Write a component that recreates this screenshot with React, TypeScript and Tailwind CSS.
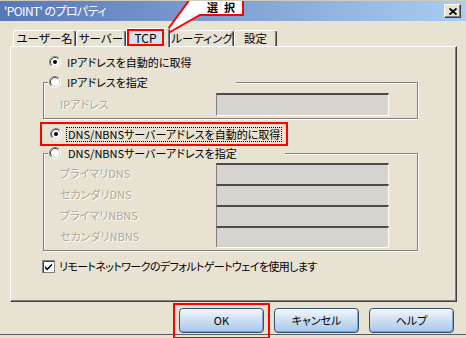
import React from "react";

function Radio({ checked }: { checked?: boolean }) {
  return (
    <svg width="12" height="12" viewBox="0 0 12 12" className="shrink-0">
      <circle cx="6" cy="6" r="5.5" fill="#fff" />
      <path d="M2.1 9.9 A5.5 5.5 0 0 1 9.9 2.1" stroke="#808080" strokeWidth="1" fill="none" />
      <path d="M9.9 2.1 A5.5 5.5 0 0 1 2.1 9.9" stroke="#ffffff" strokeWidth="1" fill="none" />
      <path d="M2.8 9.2 A4.5 4.5 0 0 1 9.2 2.8" stroke="#404040" strokeWidth="1" fill="none" />
      <path d="M9.2 2.8 A4.5 4.5 0 0 1 2.8 9.2" stroke="#d4d0c8" strokeWidth="1" fill="none" />
      {checked && <circle cx="6" cy="6" r="2" fill="#000" />}
    </svg>
  );
}

function Check() {
  return (
    <svg width="13" height="13" viewBox="0 0 13 13" className="shrink-0">
      <rect x="0.5" y="0.5" width="12" height="12" fill="#fff" stroke="#808080" />
      <path d="M1.5 12.5 V1.5 H12" stroke="#404040" fill="none" />
      <path d="M3 6 L5.2 8.3 L10 3.5 L10 5.6 L5.2 10.4 L3 8.2 Z" fill="#000" />
    </svg>
  );
}

function Tab({ label, w }: { label: string; w: string }) {
  return (
    <div
      className={`${w} h-[16px] border-l border-t border-white border-r border-r-[#404040] shadow-[inset_-1px_0_0_#808080] rounded-t-[3px] flex items-center justify-center text-[11.5px] leading-none whitespace-nowrap`}
    >
      {label}
    </div>
  );
}

function Disabled({ children }: { children: React.ReactNode }) {
  return <span className="text-[#aca899] [text-shadow:1px_1px_0_#fff]">{children}</span>;
}

function Button({ label }: { label: string }) {
  return (
    <div className="w-[85px] h-[25px] rounded-[4px] border border-[#2f5377] bg-[linear-gradient(180deg,#f4f8fd_0%,#d3e3f4_40%,#a8c6ea_100%)] shadow-[inset_0_1px_0_#fff,inset_-1px_-1px_0_#7ea2cd] flex items-center justify-center text-[11px] text-black">
      {label}
    </div>
  );
}

export default function App() {
  return (
    <div className="relative w-[466px] h-[338px] overflow-hidden bg-[#e8e2d2] border-t border-t-[#cfcabc] font-['Noto_Sans_CJK_JP',sans-serif] [font-feature-settings:'palt'] text-black flex flex-col">
      {/* title bar */}
      <div className="h-[20px] shrink-0 bg-gradient-to-r from-[#5877b5] to-[#aacdf2] flex items-center pl-[4px] pr-[5px]">
        <span className="text-white text-[12px] leading-none tracking-[-0.6px]">'POINT' のプロパティ</span>
        <div className="ml-auto w-[17px] h-[14px] bg-[#e8e2d2] border border-white border-r-[#404040] border-b-[#404040] shadow-[inset_-1px_-1px_0_#808080] flex items-center justify-center">
          <svg width="8" height="7" viewBox="0 0 8 7">
            <path d="M0.5 0.5 L7.5 6.5 M7.5 0.5 L0.5 6.5" stroke="#000" strokeWidth="1.8" />
          </svg>
        </div>
      </div>

      {/* tabs */}
      <div className="h-[25px] shrink-0 flex items-end pl-[13px]">
        <Tab label="ユーザー名" w="w-[63px]" />
        <Tab label="サーバー" w="w-[50px]" />
        <div className="relative z-10 w-[44px] h-[19px] -mb-[1px] border-l border-t border-white border-r border-r-[#404040] shadow-[inset_-1px_0_0_#808080] rounded-t-[3px] bg-[#e8e2d2]">
          <div className="w-[37px] h-[17px] border-2 border-[#ff0000] bg-[#d4e4ee] flex items-center justify-center text-[12px] leading-none">
            TCP
          </div>
        </div>
        <Tab label="ルーティング" w="w-[64px]" />
        <Tab label="設定" w="w-[43px]" />
      </div>

      {/* panel */}
      <div className="ml-[10px] w-[447px] h-[256px] shrink-0 border border-white border-r-[#404040] border-b-[#404040] shadow-[inset_-1px_-1px_0_#808080] flex flex-col text-[11px] leading-none">
        <div className="mt-[8px] h-[14px] ml-[38px] flex items-center gap-[6px]">
          <Radio checked />
          <span>IPアドレスを自動的に取得</span>
        </div>

        <div className="relative mt-[13px] ml-[32px] w-[375px] border border-[#808080] shadow-[1px_1px_0_#fff,inset_1px_1px_0_#fff] pt-[10px] pb-[2px] pl-[16px] flex items-center">
          <div className="absolute left-[4px] -top-[8px] w-[188px] h-[14px] pl-[1px] bg-[#e8e2d2] flex items-center gap-[6px]">
            <Radio />
            <span>IPアドレスを指定</span>
          </div>
          <div className="w-[156px]">
            <Disabled>IPアドレス</Disabled>
          </div>
          <div className="w-[173px] h-[23px] bg-[#d7d4cf] border-t-2 border-t-[#4b4b4b] border-l border-l-[#808080] border-r border-r-white border-b border-b-white" />
        </div>

        <div className="mt-[3px] ml-[29px] w-[248px] h-[24px] border-2 border-[#ff0000] flex items-center pl-[8px] gap-[4px]">
          <Radio checked />
          <span className="border border-dotted border-black px-[1px] py-[1px]">DNS/NBNSサーバーアドレスを自動的に取得</span>
        </div>

        <div className="relative mt-[7px] ml-[32px] w-[375px] border border-[#808080] shadow-[1px_1px_0_#fff,inset_1px_1px_0_#fff] pt-[9px] pb-[2px] pl-[16px] grid grid-cols-[156px_173px]">
          <div className="absolute left-[4px] -top-[8px] w-[237px] h-[14px] pl-[1px] bg-[#e8e2d2] flex items-center gap-[7px]">
            <Radio />
            <span>DNS/NBNSサーバーアドレスを指定</span>
          </div>
          <div className="flex flex-col">
            {["プライマリDNS", "セカンダリDNS", "プライマリNBNS", "セカンダリNBNS"].map((t) => (
              <div key={t} className="h-[21px] flex items-center">
                <Disabled>{t}</Disabled>
              </div>
            ))}
          </div>
          <div className="flex flex-col border-b border-b-white">
            {[0, 1, 2, 3].map((i) => (
              <div
                key={i}
                className="h-[21px] bg-[#d7d4cf] border-t-2 border-t-[#4b4b4b] border-l border-l-[#808080] border-r border-r-white"
              />
            ))}
          </div>
        </div>

        <div className="mt-[9px] ml-[31px] h-[13px] flex items-center gap-[4px]">
          <Check />
          <span className="tracking-[-0.6px]">リモートネットワークのデフォルトゲートウェイを使用します</span>
        </div>
      </div>

      {/* buttons */}
      <div className="mt-[6px] shrink-0 flex justify-end gap-[10px] pr-[12px]">
        <Button label="OK" />
        <Button label="キャンセル" />
        <Button label="ヘルプ" />
      </div>
      <div className="mt-[1px] h-[1px] shrink-0 bg-[#5a5a5a]" />

      {/* annotation: OK highlight */}
      <div className="absolute left-[173px] top-[302px] w-[97px] h-[36px] border-2 border-[#ff0000] pointer-events-none" />

      {/* annotation: callout */}
      <svg className="absolute left-0 top-0 pointer-events-none" width="466" height="40" viewBox="0 0 466 40">
        <path d="M190 -2 L163 35 L200 14 L243 14 L243 -2 Z" fill="#fff" stroke="#ff0000" strokeWidth="2" strokeLinejoin="miter" />
      </svg>
      <div className="absolute left-[200px] top-0 w-[42px] h-[13px] flex items-center justify-center text-[11px] font-bold leading-none tracking-[6px] pl-[6px] pointer-events-none">
        選択
      </div>
    </div>
  );
}
